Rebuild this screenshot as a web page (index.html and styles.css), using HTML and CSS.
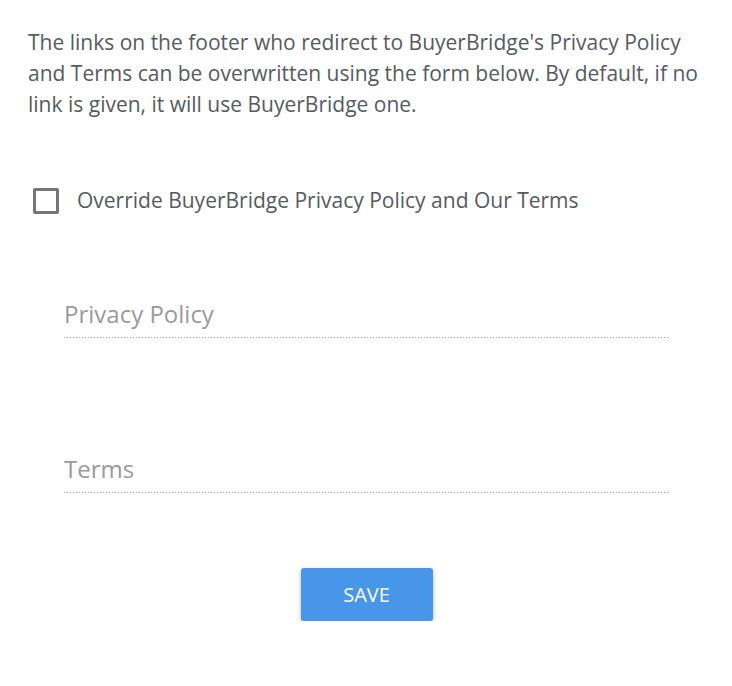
FILE: index.html
```html
<!DOCTYPE html>
<html>
<head>
<meta charset="utf-8">
<link rel="stylesheet" href="styles.css">
</head>
<body>
<div class="page">
  <p class="intro">The links on the footer who redirect to BuyerBridge's Privacy Policy and Terms can be overwritten using the form below. By default, if no link is given, it will use BuyerBridge one.</p>
  <label class="check">
    <span class="box"></span>
    <span class="check-label">Override BuyerBridge Privacy Policy and Our Terms</span>
  </label>
  <div class="fields">
    <div class="field"><input class="input" type="text" placeholder="Privacy Policy"></div>
    <div class="field"><input class="input" type="text" placeholder="Terms"></div>
  </div>
  <div class="actions">
    <button class="save">SAVE</button>
  </div>
</div>
</body>
</html>
```
FILE: styles.css
```css
html, body {
  margin: 0;
  padding: 0;
  background: #fff;
}
body {
  font-family: "Open Sans", "Noto Sans", sans-serif;
  color: #555b61;
}
.page {
  padding: 27px 28px 0 28px;
}
.intro {
  margin: 0;
  font-size: 21px;
  line-height: 31px;
  width: 680px;
}
.check {
  display: flex;
  align-items: center;
  gap: 18px;
  margin: 66px 0 0 5px;
}
.box {
  width: 20px;
  height: 20px;
  border: 3px solid #777;
  border-radius: 2px;
  flex: none;
}
.check-label {
  font-size: 21px;
  line-height: 29px;
}
.fields {
  margin: 84px 0 0 36px;
  width: 605px;
  display: flex;
  flex-direction: column;
  gap: 116px;
}
.input {
  display: block;
  width: 100%;
  box-sizing: border-box;
  border: 0;
  padding: 0 0 10px 0;
  font-family: inherit;
  font-size: 24px;
  line-height: 29px;
  outline: none;
  background-color: transparent;
  background-image: linear-gradient(to right, #9a9a9a 50%, transparent 50%);
  background-size: 3px 1px;
  background-repeat: repeat-x;
  background-position: left bottom;
}
.input::placeholder {
  color: #9a9a9a;
}
.actions {
  display: flex;
  justify-content: center;
  margin-top: 75px;
  padding-left: 1px;
}
.save {
  width: 132px;
  height: 53px;
  border: 0;
  border-radius: 3px;
  background: #4896ea;
  color: #fff;
  font-family: inherit;
  font-size: 20px;
  box-shadow: 0 2px 4px rgba(0,0,0,0.3);
}
```
